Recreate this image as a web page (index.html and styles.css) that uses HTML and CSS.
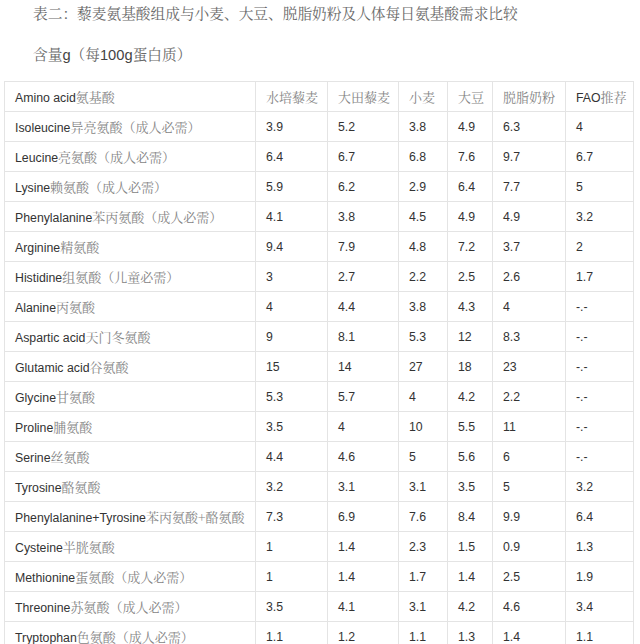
FILE: index.html
```html
<!DOCTYPE html>
<html lang="zh">
<head>
<meta charset="utf-8">
<link rel="stylesheet" href="styles.css">
</head>
<body>
<div class="page">
  <p class="title"><span class="zh">表二：藜麦氨基酸组成与小麦、大豆、脱脂奶粉及人体每日氨基酸需求比较</span></p>
  <p class="unit"><span class="zh">含量</span>g<span class="zh">（每</span>100g<span class="zh">蛋白质）</span></p>
  <table class="amino">
    <colgroup>
      <col class="c-name"><col class="c-a"><col class="c-b"><col class="c-c"><col class="c-d"><col class="c-e"><col class="c-f">
    </colgroup>
    <tr><td>Amino acid<span class="zh">氨基酸</span></td><td><span class="zh">水培藜麦</span></td><td><span class="zh">大田藜麦</span></td><td><span class="zh">小麦</span></td><td><span class="zh">大豆</span></td><td><span class="zh">脱脂奶粉</span></td><td>FAO<span class="zh">推荐</span></td></tr>
    <tr><td>Isoleucine<span class="zh">异亮氨酸（成人必需）</span></td><td>3.9</td><td>5.2</td><td>3.8</td><td>4.9</td><td>6.3</td><td>4</td></tr>
    <tr><td>Leucine<span class="zh">亮氨酸（成人必需）</span></td><td>6.4</td><td>6.7</td><td>6.8</td><td>7.6</td><td>9.7</td><td>6.7</td></tr>
    <tr><td>Lysine<span class="zh">赖氨酸（成人必需）</span></td><td>5.9</td><td>6.2</td><td>2.9</td><td>6.4</td><td>7.7</td><td>5</td></tr>
    <tr><td>Phenylalanine<span class="zh">苯丙氨酸（成人必需）</span></td><td>4.1</td><td>3.8</td><td>4.5</td><td>4.9</td><td>4.9</td><td>3.2</td></tr>
    <tr><td>Arginine<span class="zh">精氨酸</span></td><td>9.4</td><td>7.9</td><td>4.8</td><td>7.2</td><td>3.7</td><td>2</td></tr>
    <tr><td>Histidine<span class="zh">组氨酸（儿童必需）</span></td><td>3</td><td>2.7</td><td>2.2</td><td>2.5</td><td>2.6</td><td>1.7</td></tr>
    <tr><td>Alanine<span class="zh">丙氨酸</span></td><td>4</td><td>4.4</td><td>3.8</td><td>4.3</td><td>4</td><td>-.-</td></tr>
    <tr><td>Aspartic acid<span class="zh">天门冬氨酸</span></td><td>9</td><td>8.1</td><td>5.3</td><td>12</td><td>8.3</td><td>-.-</td></tr>
    <tr><td>Glutamic acid<span class="zh">谷氨酸</span></td><td>15</td><td>14</td><td>27</td><td>18</td><td>23</td><td>-.-</td></tr>
    <tr><td>Glycine<span class="zh">甘氨酸</span></td><td>5.3</td><td>5.7</td><td>4</td><td>4.2</td><td>2.2</td><td>-.-</td></tr>
    <tr><td>Proline<span class="zh">脯氨酸</span></td><td>3.5</td><td>4</td><td>10</td><td>5.5</td><td>11</td><td>-.-</td></tr>
    <tr><td>Serine<span class="zh">丝氨酸</span></td><td>4.4</td><td>4.6</td><td>5</td><td>5.6</td><td>6</td><td>-.-</td></tr>
    <tr><td>Tyrosine<span class="zh">酪氨酸</span></td><td>3.2</td><td>3.1</td><td>3.1</td><td>3.5</td><td>5</td><td>3.2</td></tr>
    <tr><td>Phenylalanine+Tyrosine<span class="zh">苯丙氨酸+酪氨酸</span></td><td>7.3</td><td>6.9</td><td>7.6</td><td>8.4</td><td>9.9</td><td>6.4</td></tr>
    <tr><td>Cysteine<span class="zh">半胱氨酸</span></td><td>1</td><td>1.4</td><td>2.3</td><td>1.5</td><td>0.9</td><td>1.3</td></tr>
    <tr><td>Methionine<span class="zh">蛋氨酸（成人必需）</span></td><td>1</td><td>1.4</td><td>1.7</td><td>1.4</td><td>2.5</td><td>1.9</td></tr>
    <tr><td>Threonine<span class="zh">苏氨酸（成人必需）</span></td><td>3.5</td><td>4.1</td><td>3.1</td><td>4.2</td><td>4.6</td><td>3.4</td></tr>
    <tr><td>Tryptophan<span class="zh">色氨酸（成人必需）</span></td><td>1.1</td><td>1.2</td><td>1.1</td><td>1.3</td><td>1.4</td><td>1.1</td></tr>
  </table>
</div>
</body>
</html>
```

FILE: styles.css
```css
html, body {
  margin: 0;
  padding: 0;
  background: #fff;
}

.page {
  font-family: "Liberation Sans", "Noto Sans CJK SC", sans-serif;
  color: #333;
}

.zh {
  font-family: "Noto Serif CJK SC", "Noto Sans CJK SC", serif;
  color: #858585;
}

.title {
  margin: 0;
  padding-left: 33px;
  font-size: 14.7px;
  line-height: 26px;
}

.title .zh {
  color: #6a6a6a;
}

.unit {
  margin: 14px 0 13px;
  padding-left: 33px;
  font-size: 14.7px;
  line-height: 26px;
  color: #444;
}

.unit .zh {
  color: #6a6a6a;
}

.amino {
  margin-left: 4px;
  width: 629px;
  table-layout: fixed;
  border-collapse: collapse;
  font-size: 12.3px;
}

.amino td {
  height: 29px;
  padding: 0 0 0 10px;
  border: 1px solid #e4e4e4;
  white-space: nowrap;
  overflow: hidden;
  vertical-align: middle;
}

.amino .zh {
  font-size: 13px;
}

.c-name { width: 251px; }
.c-a { width: 72px; }
.c-b { width: 71px; }
.c-c { width: 49px; }
.c-d { width: 45px; }
.c-e { width: 73px; }
.c-f { width: 68px; }
```
